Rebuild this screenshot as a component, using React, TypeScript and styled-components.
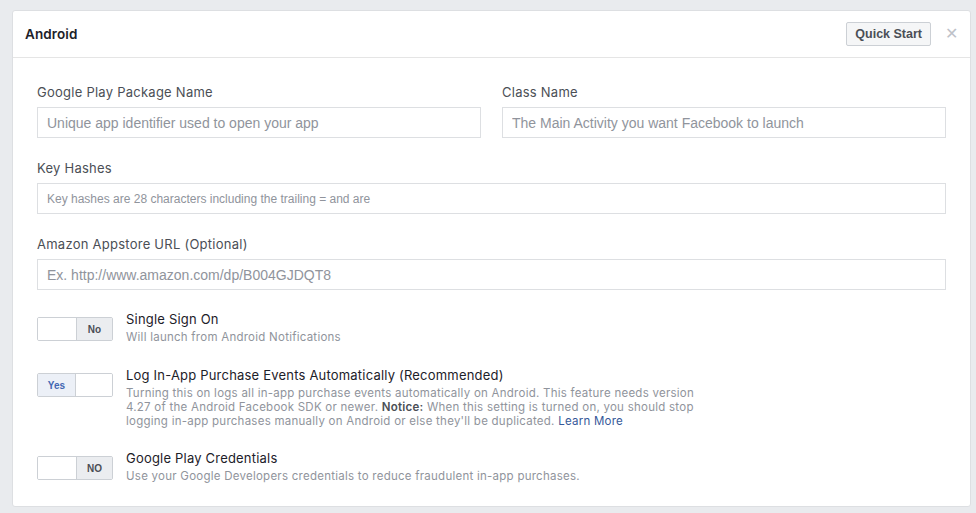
import React from "react";
import styled, { createGlobalStyle } from "styled-components";

const Global = createGlobalStyle`
  html, body { margin: 0; padding: 0; background: #e9ebee; }
  body { font-family: Inter, "Liberation Sans", Arial, sans-serif; -webkit-font-smoothing: antialiased; }
  * { box-sizing: border-box; }
`;

const Page = styled.div`
  width: 976px;
  height: 513px;
  padding: 10px 5px 6px 12px;
  background: #e9ebee;
  overflow: hidden;
`;

const Card = styled.div`
  background: #fff;
  border: 1px solid #dddfe2;
  border-radius: 3px;
  height: 497px;
  overflow: hidden;
`;

const Header = styled.div`
  height: 47px;
  display: flex;
  align-items: center;
  padding: 0 12px 0 12px;
  border-bottom: 1px solid #e5e5e5;
`;

const Title = styled.div`
  flex: 1;
  font-size: 13.5px;
  font-weight: 600;
  color: #1d2129;
  letter-spacing: 0.1px;
`;

const QuickButton = styled.button`
  height: 24px;
  padding: 0 8px;
  border: 1px solid #ccd0d5;
  border-radius: 2px;
  background: #f5f6f7;
  color: #4b4f56;
  font-family: "Liberation Sans", Arial, sans-serif;
  font-weight: bold;
  font-size: 12.5px;
  margin-right: 14px;
`;

const Close = styled.span`
  color: #bec2c9;
  font-size: 16px;
  line-height: 1;
  font-family: "Liberation Sans", Arial, sans-serif;
`;

const Body = styled.div`
  padding: 26px 24px 0 24px;
  display: flex;
  flex-direction: column;
`;

const Row = styled.div`
  display: grid;
  grid-template-columns: 1fr 1fr;
  column-gap: 21px;
`;

const Field = styled.div<{ $mb?: number }>`
  display: flex;
  flex-direction: column;
  margin-bottom: ${(p) => p.$mb ?? 22}px;
`;

const Label = styled.label`
  font-size: 13px;
  color: #4b4f56;
  line-height: 16px;
  margin-bottom: 7px;
  letter-spacing: 0.25px;
`;

const Input = styled.input<{ $small?: boolean }>`
  height: 31px;
  width: 100%;
  border: 1px solid #dddfe2;
  border-radius: 0;
  padding: 0 9px;
  font-family: "Liberation Sans", Arial, sans-serif;
  font-size: ${(p) => (p.$small ? 12 : 14)}px;
  color: #1d2129;
  outline: none;
  &::placeholder { color: #90949c; }
`;

const ToggleRow = styled.div<{ $mb: number }>`
  display: flex;
  align-items: flex-start;
  gap: 13px;
  margin-bottom: ${(p) => p.$mb}px;
`;

const Toggle = styled.div`
  width: 76px;
  height: 24px;
  border: 1px solid #ccd0d5;
  border-radius: 2px;
  display: flex;
  overflow: hidden;
  flex-shrink: 0;
`;

const Half = styled.div<{ $on?: boolean; $filled?: boolean; $w: number }>`
  width: ${(p) => p.$w}px;
  display: flex;
  align-items: center;
  justify-content: center;
  font-family: "Liberation Sans", Arial, sans-serif;
  font-size: 10px;
  font-weight: bold;
  color: ${(p) => (p.$on ? "#4267b2" : "#4b4f56")};
  background: ${(p) => (p.$filled ? (p.$on ? "#ecf0f7" : "#ebedf0") : "#fff")};
  & + & { border-left: 1px solid #ccd0d5; }
`;

const Info = styled.div`
  display: flex;
  flex-direction: column;
  margin-top: -6px;
`;

const InfoTitle = styled.div`
  font-size: 13px;
  color: #1d2129;
  line-height: 17px;
  letter-spacing: 0.2px;
`;

const InfoText = styled.div`
  font-size: 11.5px;
  color: #90949c;
  line-height: 14px;
  white-space: nowrap;
  letter-spacing: 0.25px;
  margin-top: 2px;
  b { color: #4b4f56; font-weight: 600; }
  a { color: #365899; text-decoration: none; }
`;

export default function App() {
  return (
    <>
      <Global />
      <Page>
        <Card>
          <Header>
            <Title>Android</Title>
            <QuickButton>Quick Start</QuickButton>
            <Close>✕</Close>
          </Header>
          <Body>
            <Row>
              <Field>
                <Label>Google Play Package Name</Label>
                <Input placeholder="Unique app identifier used to open your app" />
              </Field>
              <Field>
                <Label>Class Name</Label>
                <Input placeholder="The Main Activity you want Facebook to launch" />
              </Field>
            </Row>
            <Field>
              <Label>Key Hashes</Label>
              <Input $small placeholder="Key hashes are 28 characters including the trailing = and are" />
            </Field>
            <Field $mb={27}>
              <Label>Amazon Appstore URL (Optional)</Label>
              <Input placeholder="Ex. http://www.amazon.com/dp/B004GJDQT8" />
            </Field>
            <ToggleRow $mb={29}>
              <Toggle>
                <Half $w={39} />
                <Half $w={37} $filled>No</Half>
              </Toggle>
              <Info>
                <InfoTitle>Single Sign On</InfoTitle>
                <InfoText>Will launch from Android Notifications</InfoText>
              </Info>
            </ToggleRow>
            <ToggleRow $mb={28}>
              <Toggle>
                <Half $w={38} $filled $on>Yes</Half>
                <Half $w={38} />
              </Toggle>
              <Info>
                <InfoTitle>Log In-App Purchase Events Automatically (Recommended)</InfoTitle>
                <InfoText>
                  Turning this on logs all in-app purchase events automatically on Android. This feature needs version
                  <br />
                  4.27 of the Android Facebook SDK or newer. <b>Notice:</b> When this setting is turned on, you should stop
                  <br />
                  logging in-app purchases manually on Android or else they'll be duplicated. <a href="#">Learn More</a>
                </InfoText>
              </Info>
            </ToggleRow>
            <ToggleRow $mb={0}>
              <Toggle>
                <Half $w={39} />
                <Half $w={37} $filled>NO</Half>
              </Toggle>
              <Info>
                <InfoTitle>Google Play Credentials</InfoTitle>
                <InfoText>Use your Google Developers credentials to reduce fraudulent in-app purchases.</InfoText>
              </Info>
            </ToggleRow>
          </Body>
        </Card>
      </Page>
    </>
  );
}
